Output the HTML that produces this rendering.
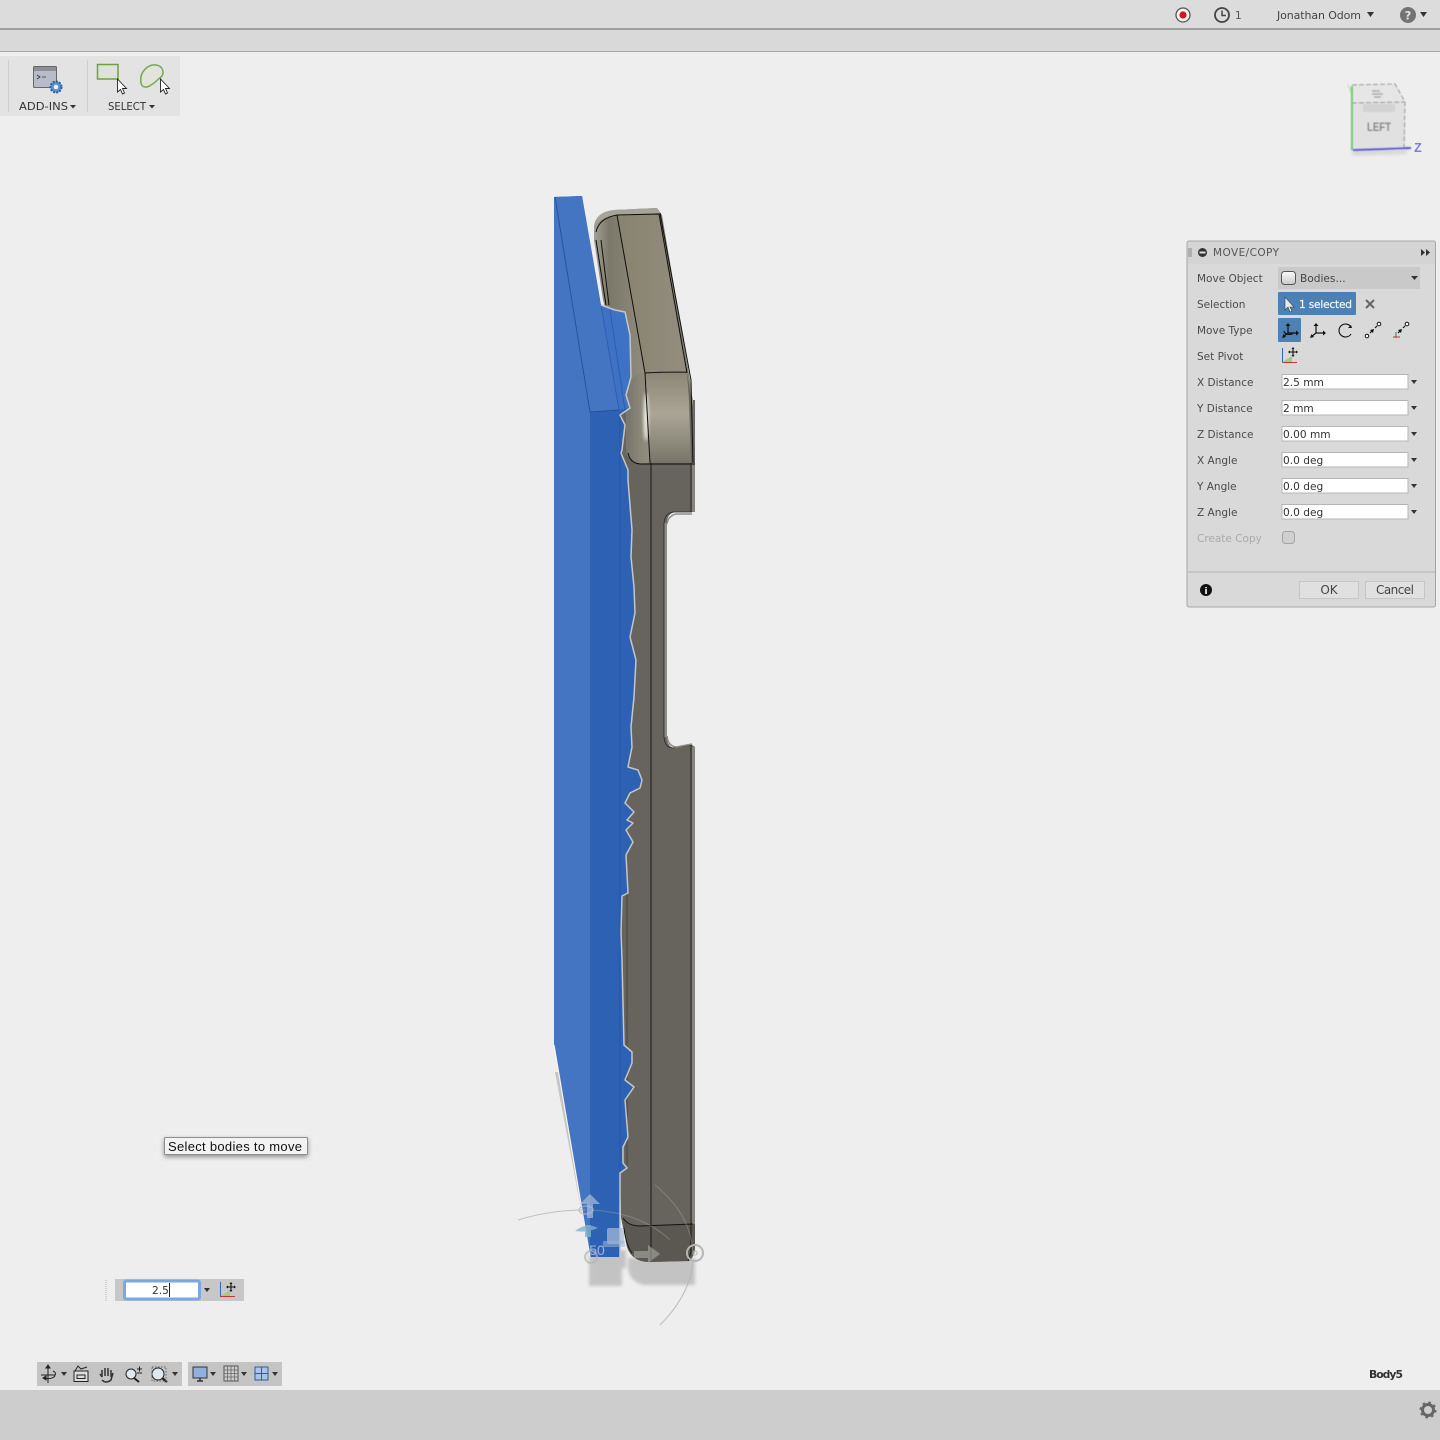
<!DOCTYPE html>
<html><head><meta charset="utf-8"><title>Move/Copy</title>
<style>
html,body{margin:0;padding:0;background:#eee;width:1440px;height:1440px;overflow:hidden}
svg{display:block;position:absolute;left:0;top:0}
text{font-family:"DejaVu Sans","Liberation Sans",sans-serif;font-size:10.5px;fill:#444}
.l{font-size:10.5px;fill:#4a4a4a}
.v{font-size:10.6px;fill:#333}
</style></head><body>
<svg width="1440" height="1440" viewBox="0 0 1440 1440" xmlns="http://www.w3.org/2000/svg">
<defs>
<linearGradient id="top" x1="0" y1="0" x2="1" y2="0"><stop offset="0" stop-color="#88836f"/><stop offset="1" stop-color="#928d7e"/></linearGradient>
<linearGradient id="fil" x1="0" y1="0" x2="1" y2="0"><stop offset="0" stop-color="#a3a095"/><stop offset=".3" stop-color="#7b7769"/><stop offset=".7" stop-color="#888475"/><stop offset="1" stop-color="#918c7d"/></linearGradient>
<linearGradient id="low" x1="0" y1="0" x2="0" y2="1"><stop offset="0" stop-color="#8b8675"/><stop offset=".45" stop-color="#aaa596"/><stop offset="1" stop-color="#797669"/></linearGradient>
<linearGradient id="cor" x1="0" y1="0" x2="1" y2="0"><stop offset="0" stop-color="#77746a"/><stop offset=".6" stop-color="#8a8678"/><stop offset="1" stop-color="#938e7f"/></linearGradient>
<linearGradient id="cyl" x1="0" y1="0" x2="0" y2="1"><stop offset="0" stop-color="#fafafa"/><stop offset="1" stop-color="#c9c9c9"/></linearGradient>
<filter id="b2"><feGaussianBlur stdDeviation="1.500"/></filter>
<filter id="b1"><feGaussianBlur stdDeviation=".6"/></filter>
<filter id="b0"><feGaussianBlur stdDeviation=".35"/></filter>
<filter id="b3" x="-200%" y="-50%" width="500%" height="200%"><feGaussianBlur stdDeviation="1.500"/></filter>
<filter id="sh" x="-20%" y="-40%" width="140%" height="200%"><feDropShadow dx="0" dy="2" stdDeviation="2.500" flood-color="#000" flood-opacity=".4"/></filter>
</defs>

<!-- chrome -->
<rect width="1440" height="1440" fill="#eeeeee"/>
<rect width="1440" height="28" fill="#dcdcdc"/>
<rect y="28" width="1440" height="2" fill="#9f9f9f"/>
<rect y="30" width="1440" height="21" fill="#d9d9d9"/>
<rect y="51" width="1440" height="1" fill="#a8a8a8"/>
<rect y="1390" width="1440" height="50" fill="#cdcdcd"/>

<!-- top right -->
<circle cx="1183" cy="15" r="7" fill="#f3f3f3" stroke="#555" stroke-width="1.300"/><circle cx="1183" cy="15" r="3.600" fill="#d8102a"/>
<circle cx="1222" cy="15" r="7" fill="none" stroke="#444" stroke-width="1.800"/><path d="M1222 10.500V15.500H1226" fill="none" stroke="#444" stroke-width="1.500"/>
<text x="1235" y="19" style="fill:#555">1</text>
<text x="1277" y="19" textLength="84" style="font-size:11px;fill:#444">Jonathan Odom</text>
<path d="M1367 12h7l-3.500 5z" fill="#333"/>
<circle cx="1408" cy="15" r="8" fill="#737373"/><text x="1408" y="19.500" text-anchor="middle" style="font-size:11.500px;font-weight:bold;fill:#e4e4e4">?</text>
<path d="M1420 12h7l-3.500 5z" fill="#333"/>

<!-- ribbon -->
<rect x="0" y="56" width="180" height="60" fill="#e3e3e3"/>
<rect x="8" y="60" width="1" height="52" fill="#cfcfcf"/>
<rect x="87" y="60" width="1" height="52" fill="#cfcfcf"/>
<rect x="33.500" y="66.500" width="23" height="21" rx="1" fill="#b8bcc8" stroke="#666"/>
<rect x="34" y="67" width="22" height="4" fill="#8e8e95"/>
<path d="M37 75l3 2-3 2M42 77h4" fill="none" stroke="#333" stroke-width=".8"/>
<circle cx="56" cy="87" r="5.500" fill="#5a8fd0" stroke="#2f5f9f" stroke-width="2" stroke-dasharray="2 1.200"/><circle cx="56" cy="87" r="2.300" fill="#eef"/>
<text x="19" y="110" textLength="49" lengthAdjust="spacingAndGlyphs" style="font-size:10.500px;fill:#333">ADD-INS</text>
<path d="M70 105h6l-3 3.500z" fill="#333"/>
<rect x="97.500" y="64.500" width="20.500" height="14.500" fill="#dfe2da" stroke="#6fa040" stroke-width="1.500"/>
<path d="M141 83C139 72 148 64 156 65C163 66 165 73 161 77C157 80 155 83 151 85C147 88 142 88 141 83z" fill="#e2e4dc" stroke="#7aa84c" stroke-width="1.500"/>
<path d="M117.500 79v13l3-2.500 2 4.500 2-1-2-4.500h4z" fill="#fff" stroke="#222" stroke-width=".9"/>
<path d="M160.500 79v13l3-2.500 2 4.500 2-1-2-4.500h4z" fill="#fff" stroke="#222" stroke-width=".9"/>
<text x="108" y="110" textLength="38" lengthAdjust="spacingAndGlyphs" style="font-size:10.500px;fill:#333">SELECT</text>
<path d="M149 105h6l-3 3.500z" fill="#333"/>

<!-- view cube -->
<path d="M1350 150l4 6 52-2 3-8z" fill="#cfcfcf" opacity=".7" filter="url(#b2)"/>
<g filter="url(#b1)">
<path d="M1352 103L1352 85 1395 84 1405 102z" fill="#e6e6e6"/>
<rect x="1352" y="102" width="53" height="48" fill="#e1e1e1"/>
<rect x="1363" y="104" width="32" height="8" fill="#d3d3d3"/>
<path d="M1352 85L1395 84 1405 102 1404 148M1352 103L1405 102" fill="none" stroke="#8a8a8a" stroke-width=".9" stroke-dasharray="5 2"/>
<path d="M1372 91h8M1372 94h11M1374 97h7" stroke="#999" stroke-width="1.200"/>
<path d="M1352 150V86" stroke="#69cc66" stroke-width="2"/>
<path d="M1353 150L1411 148" stroke="#5a55d8" stroke-width="2"/>
<text x="1350" y="92" text-anchor="middle" style="font-size:10px;fill:#a8e0a0">Y</text>
<text x="1379" y="131" text-anchor="middle" textLength="24" lengthAdjust="spacingAndGlyphs" style="font-size:12px;font-weight:bold;fill:#808080;font-family:'Liberation Sans',sans-serif">LEFT</text>
</g>
<text x="1418" y="152" text-anchor="middle" style="font-size:12.500px;font-weight:bold;fill:#7d7ce0;font-family:'Liberation Sans',sans-serif">Z</text>

<!-- shadow under model -->
<g filter="url(#b2)" fill="#c3c3c3">
<path d="M589 1250H626V1268H622V1286H589z"/>
<path d="M628 1258H695V1285H645Q630 1283 628 1268z"/>
</g>
<path d="M555 1072L590 1256 596 1256 559 1072z" fill="#c6c4bc" filter="url(#b0)"/>

<!-- gray body -->
<path d="M600 400L695 400 695 512 676 512Q667 513 667 523V737Q667 748 676 748L692 745 695 747V1247Q695 1256 689 1261L650 1262Q632 1262 627 1247L621 1217 620 1173 600 1173z" fill="#66645c"/>
<rect x="692" y="463" width="3" height="49" fill="#85847d"/><rect x="692" y="747" width="3" height="500" fill="#85847d"/>
<path d="M691 463V512M691 744V1226" stroke="#222" stroke-width=".9"/>
<path d="M651 463V1260" stroke="#111" stroke-width=".9"/>
<path d="M665.500 523V737" stroke="#8f8e88" stroke-width="3"/>
<path d="M692 512H673Q665 513 664 523V737Q665 748 673 748L692 745" fill="none" stroke="#2a2a28" stroke-width=".8"/>
<path d="M692 514H676Q668 516 667 524M667 736Q668 746 676 747L692 744" fill="none" stroke="#8f8e88" stroke-width="1.500"/>
<path d="M627 893V1165" stroke="#35332c" stroke-width=".6"/>
<path d="M621 1217Q626 1226 640 1226L695 1224V1247Q695 1256 689 1261L650 1262Q632 1262 627 1247z" fill="#5a5850"/>
<path d="M623 1218Q628 1226 640 1226L693 1224M651 1226V1260M691 1224V1252L688 1261M624 1228Q626 1245 632 1253" fill="none" stroke="#111" stroke-width=".9"/>

<!-- beige top -->
<path d="M594 226Q596 212 614 210L657 208 662 215 690 380 693 407 695 463H650L640 464Q628 462 626 452L626 400 594 240z" fill="#85816f"/>
<path d="M617 213L659 213 687 373H645z" fill="url(#top)"/>
<path d="M594 226Q596 212 614 210L657 208 660 213 617 215Q600 218 596 232z" fill="#a6a398"/>
<path d="M594 226Q600 218 617 215L645 373Q632 376 627 384L603 300 594 240z" fill="url(#fil)"/>
<path d="M645 373H687L693 400 695 463H650z" fill="url(#low)"/>
<path d="M627 384Q632 375 645 373L650 463H640Q628 462 626 452z" fill="url(#cor)"/>
<ellipse cx="646" cy="417" rx="2.500" ry="24" fill="#eceae2" filter="url(#b3)"/>
<path d="M687 373L693 407 695 463H691L689 400z" fill="#66645d"/>
<g filter="url(#b0)">
<path d="M596 232Q599 218 617 215L659 214M617 215L645 373 650 463M659 214L687 373M645 373Q660 372 687 372M660 213L691 380 693 463M596 240L606 305M601 240L609 305M628 453Q630 463 640 464H695" fill="none" stroke="#111" stroke-width="1"/>
</g>

<!-- blue body -->
<path d="M554 197L582 196 601 305 615 310 625 312 630 335 631 377 626 395 630 408 620 415 625 425 622 450 621 453 628 470 628 480 632 530 631 557 634 587 635 613 630 637 636 660 634 697 631 727 632 747 628 767 638 770 642 780 640 788 630 793 625 803 634 812 627 820 633 823 626 830 633 842 626 855 628 893 622 896 621 933 622 960 624 1045 632 1052 632 1063 625 1080 634 1087 625 1100 628 1137 623 1147 623 1163 627 1168 620 1173V1257L590 1257 554 1045z" fill="#2d61b4"/>
<path d="M554 197L582 196 619 410 590 412 590 1257 554 1045z" fill="#4375c2"/>
<path d="M601 305L625 312 630 335 631 377 626 395 630 408 619 410z" fill="#3e72c4"/>
<path d="M555 197L590 412M590 412L619 410" fill="none" stroke="#274f96" stroke-width=".9" filter="url(#b0)"/>
<path d="M601 305L619 410M610 310L625 410" fill="none" stroke="#2d5cb0" stroke-width=".9" filter="url(#b0)"/>
<path d="M620 412V1257" stroke="#2553a6" stroke-width="1"/>
<path d="M601 305L615 310 625 312 630 335 631 377 626 395 630 408 620 415 625 425 622 450 621 453 628 470 628 480 632 530 631 557 634 587 635 613 630 637 636 660 634 697 631 727 632 747 628 767 638 770 642 780 640 788 630 793 625 803 634 812 627 820 633 823 626 830 633 842 626 855 628 893 622 896 621 933 622 960 624 1045 632 1052 632 1063 625 1080 634 1087 625 1100 628 1137 623 1147 623 1163 627 1168 620 1173V1257" fill="none" stroke="#c3c6c8" stroke-width="1.500" stroke-linejoin="round" filter="url(#b0)"/>
<path d="M554 1045L590 1257" stroke="#f4f4f4" stroke-width="1.200"/>

<!-- gizmo -->
<g fill="none" stroke="#b4b6b4" stroke-width="1" filter="url(#b0)">
<path d="M518 1220Q550 1210 585 1210" opacity=".8"/>
<path d="M590 1210Q640 1212 670 1240" opacity=".35"/>
<path d="M655 1185Q692 1215 693 1255" opacity=".35"/>
<path d="M693 1262Q690 1295 660 1325" opacity=".9"/>
<circle cx="591" cy="1257" r="6" stroke-width="2" opacity=".7"/>
<circle cx="695" cy="1253" r="8" stroke-width="2"/>
<circle cx="695" cy="1253" r="2"/>
<ellipse cx="586" cy="1210" rx="7" ry="4" stroke-width="1.500" opacity=".7"/>
</g>
<g filter="url(#b0)">
<path d="M590 1194L600 1204 593 1204 593 1218 587 1218 587 1204 580 1204z" fill="#a9bedc" opacity=".7"/>
<path d="M575 1231Q586 1222 598 1228 586 1233 575 1231zM585 1225h6v12h-6z" fill="#7fb2cf" opacity=".8"/>
<rect x="607" y="1228" width="17" height="16" rx="2" fill="#a9bedc" opacity=".7"/>
<rect x="603" y="1241" width="22" height="6" fill="#9fb4d4" opacity=".55"/>
<path d="M660 1254L648 1245 648 1251 634 1251 634 1258 648 1258 648 1263z" fill="#a5a39c" opacity=".65"/>
</g>
<text x="597" y="1255" text-anchor="middle" style="font-size:14px;fill:#9db8e0;font-family:'Liberation Sans',sans-serif">50</text>

<!-- panel -->
<rect x="1187" y="241" width="248.500" height="366" rx="2" fill="#d9d9d9" stroke="#a5a5a5"/>
<rect x="1188" y="242" width="247" height="22" fill="#d4d4d4"/>
<path d="M1189 248v9M1191 248v9" stroke="#777" stroke-width=".8"/>
<circle cx="1202.500" cy="252.500" r="4.500" fill="#333"/><rect x="1199.500" y="251.500" width="6" height="2" fill="#ddd"/>
<text x="1213" y="256" textLength="66" style="font-size:10.500px;fill:#555">MOVE/COPY</text>
<path d="M1421 249v7l4-3.500zM1426 249v7l4-3.500z" fill="#333"/>

<text class="l" x="1197" y="282">Move Object</text>
<text class="l" x="1197" y="308">Selection</text>
<text class="l" x="1197" y="334">Move Type</text>
<text class="l" x="1197" y="360">Set Pivot</text>
<text class="l" x="1197" y="386">X Distance</text>
<text class="l" x="1197" y="412">Y Distance</text>
<text class="l" x="1197" y="438">Z Distance</text>
<text class="l" x="1197" y="464">X Angle</text>
<text class="l" x="1197" y="490">Y Angle</text>
<text class="l" x="1197" y="516">Z Angle</text>
<text class="l" x="1197" y="542" style="fill:#aaa">Create Copy</text>

<rect x="1278" y="267" width="142" height="22" fill="#c9c9c9"/>
<rect x="1281.500" y="271.500" width="14" height="13" rx="3" fill="url(#cyl)" stroke="#555"/>
<text class="v" x="1300" y="282" style="fill:#444">Bodies...</text>
<path d="M1411 276h7l-3.500 4z" fill="#333"/>

<rect x="1278" y="292" width="78" height="23" rx="1" fill="#4c81b5"/>
<path d="M1285 297v13l3-3 2 5 2-1-2-4h4z" fill="#e9e9e9" stroke="#345" stroke-width=".6"/>
<text x="1299" y="308" textLength="53" style="font-size:10.600px;fill:#f2f5f8;stroke:#f2f5f8;stroke-width:.2">1 selected</text>
<path d="M1366 300l8 8M1374 300l-8 8" stroke="#666" stroke-width="2"/>

<rect x="1278" y="318" width="23" height="24" rx="1" fill="#4c81b5"/>
<g fill="none" stroke="#111" stroke-width="1.200">
<path d="M1288 326V333M1288 333L1283 337M1288 333H1296"/>
<path d="M1284 331a5 3.500 0 0 0 9 2"/>
<path d="M1316 326V333M1316 333L1311 337M1316 333H1324"/>
<path d="M1351 327A6.500 6.500 0 1 0 1351 334" stroke-width="1.100"/>
<path d="M1370 333L1372 331M1375 328L1377 326M1398 333L1400 331M1403 328L1405 326"/>
</g>
<path d="M1288 323l-2.500 3h5zM1299 333l-3-2.500v5zM1282 338l4-1-2.500-3zM1316 323l-2.500 3h5zM1326 333l-3-2.500v5zM1310 338l4-1-2.500-3zM1351 325l-3 3h4zM1374 329l-4 1 3 3zM1402 329l-4 1 3 3z" fill="#111"/>
<circle cx="1367" cy="336" r="1.800" fill="#fff" stroke="#111"/><circle cx="1379" cy="324" r="1.800" fill="#fff" stroke="#111"/>
<circle cx="1407" cy="324" r="1.800" fill="#fff" stroke="#111"/>
<path d="M1396 332v6" stroke="#2a8a3a" stroke-width="1"/><path d="M1393 337h7" stroke="#cc3333"/>

<path d="M1282.500 362L1292 356 1292 362z" fill="#9ad07a"/>
<path d="M1282.500 348V362.500" stroke="#2a6ab0"/><path d="M1282.500 362.500H1297" stroke="#cc3333"/>
<path d="M1293 348v8M1289 352h8" stroke="#111" stroke-width="1.100"/>
<path d="M1293 347l-1.500 2h3zM1293 357l-1.500-2h3zM1288 352l2-1.500v3zM1298 352l-2-1.500v3z" fill="#111"/>

<g fill="#fff" stroke="#b5b5b5">
<rect x="1282" y="374.500" width="126" height="14.500"/>
<rect x="1282" y="400.500" width="126" height="14.500"/>
<rect x="1282" y="426.500" width="126" height="14.500"/>
<rect x="1282" y="452.500" width="126" height="14.500"/>
<rect x="1282" y="478.500" width="126" height="14.500"/>
<rect x="1282" y="504.500" width="126" height="14.500"/>
</g>
<text class="v" x="1283" y="386">2.5 mm</text>
<text class="v" x="1283" y="412">2 mm</text>
<text class="v" x="1283" y="438">0.00 mm</text>
<text class="v" x="1283" y="464">0.0 deg</text>
<text class="v" x="1283" y="490">0.0 deg</text>
<text class="v" x="1283" y="516">0.0 deg</text>
<path d="M1411 380h6l-3 4zM1411 406h6l-3 4zM1411 432h6l-3 4zM1411 458h6l-3 4zM1411 484h6l-3 4zM1411 510h6l-3 4z" fill="#333"/>
<rect x="1282.500" y="531.500" width="12" height="12" rx="3" fill="#d0d0d0" stroke="#a5a5a5"/>

<path d="M1188 572H1435" stroke="#b0b0b0"/>
<circle cx="1206" cy="590" r="6" fill="#111"/><text x="1206" y="594" text-anchor="middle" style="font-size:9px;font-weight:bold;fill:#fff">i</text>
<rect x="1299.500" y="581.500" width="59" height="17" fill="#e0e0e0" stroke="#c6c6c6"/>
<rect x="1365.500" y="581.500" width="59" height="17" fill="#e0e0e0" stroke="#c6c6c6"/>
<text x="1329" y="594" text-anchor="middle" style="font-size:12px;fill:#444">OK</text>
<text x="1395" y="594" text-anchor="middle" textLength="38" style="font-size:12px;fill:#444">Cancel</text>

<!-- tooltip -->
<rect x="164.500" y="1137.500" width="143" height="17" rx="1" fill="#f3f3f3" stroke="#8f8f8f" filter="url(#sh)"/>
<text x="168" y="1151" textLength="134" style="font-size:13px;fill:#111;font-family:'Liberation Sans',sans-serif">Select bodies to move</text>

<!-- mini input -->
<path d="M106 1280v21" stroke="#d0d0d0" stroke-width="2" stroke-dasharray="1 1"/>
<rect x="115" y="1279" width="129" height="22" fill="#c7c7c7"/>
<rect x="124.500" y="1281" width="75" height="18" rx="1.500" fill="#fff" stroke="#78a9e2" stroke-width="3"/>
<text x="152" y="1294" style="font-size:10.600px;fill:#333">2.5</text>
<path d="M169.500 1283V1297" stroke="#222"/>
<path d="M204 1288h6l-3 4z" fill="#333"/>
<path d="M220.500 1296.500L230 1290 230 1296.500z" fill="#9ad07a"/>
<path d="M220.500 1282V1297" stroke="#2a6ab0"/><path d="M220.500 1296.500H235" stroke="#cc3333"/>
<path d="M231 1283v8M227 1287h8" stroke="#111" stroke-width="1.100"/>
<path d="M231 1282l-1.500 2h3zM231 1292l-1.500-2h3zM226 1287l2-1.500v3zM236 1287l-2-1.500v3z" fill="#111"/>

<!-- nav bar -->
<rect x="37" y="1362" width="145" height="24" fill="#c4c4c4"/>
<rect x="188" y="1362" width="94" height="24" fill="#c4c4c4"/>
<g fill="none" stroke="#222" stroke-width="1">
<path d="M48 1366V1383M41 1375H55"/>
<path d="M53 1371A7 3.500 0 0 1 55 1375A7 3.500 0 0 1 44 1378"/>
<path d="M48 1365l-2 3h4zM46 1376l-3 2 3 2z" fill="#222"/>
<rect x="74" y="1371" width="14" height="10.500" fill="#ddd"/>
<rect x="77" y="1375" width="8" height="3.500"/>
<path d="M75 1371L78 1366 81 1369 87 1367"/>
<path d="M102 1377V1370M105 1376V1368M108 1376V1368M111 1377V1370M102 1377L100 1374M102 1380Q106 1384 111 1380L113 1373" stroke="#333" stroke-width="1.500"/>
<circle cx="131" cy="1374" r="5" fill="#dfe8ee"/><path d="M134 1378L139 1382" stroke-width="2"/><path d="M137 1369h5M139.500 1366.500v5M137 1373h5"/>
<circle cx="158" cy="1374" r="6" fill="#dfe8ee"/><path d="M162 1378L167 1382" stroke-width="2.200"/><rect x="152" y="1367" width="14" height="14" stroke-dasharray="1.500 1.500" stroke="#666"/>
</g>
<rect x="193" y="1367" width="14" height="11" fill="#8fb0dc" stroke="#333"/><path d="M197 1381h6M200 1378v3" stroke="#333" stroke-width="1.500"/>
<rect x="224" y="1366" width="14" height="15" fill="#ccc" stroke="#555"/>
<path d="M224 1370h14M224 1373.500h14M224 1377h14M227.500 1366v15M231 1366v15M234.500 1366v15" stroke="#666" stroke-width=".8"/>
<rect x="255" y="1367" width="13" height="13" fill="#a9c4e8" stroke="#2d5c9c"/><path d="M255 1373.500h13M261.500 1367v13" stroke="#2d5c9c"/>
<path d="M61 1372h6l-3 4zM172 1372h6l-3 4zM210 1372h6l-3 4zM241 1372h6l-3 4zM272 1372h6l-3 4z" fill="#333"/>

<text x="1369" y="1378" textLength="34" style="font-size:10.800px;font-weight:bold;fill:#333">Body5</text>
<circle cx="1428" cy="1410" r="5.500" fill="none" stroke="#666" stroke-width="3"/>
<circle cx="1428" cy="1410" r="7.500" fill="none" stroke="#666" stroke-width="2" stroke-dasharray="2.500 3.400"/>
</svg>
</body></html>
